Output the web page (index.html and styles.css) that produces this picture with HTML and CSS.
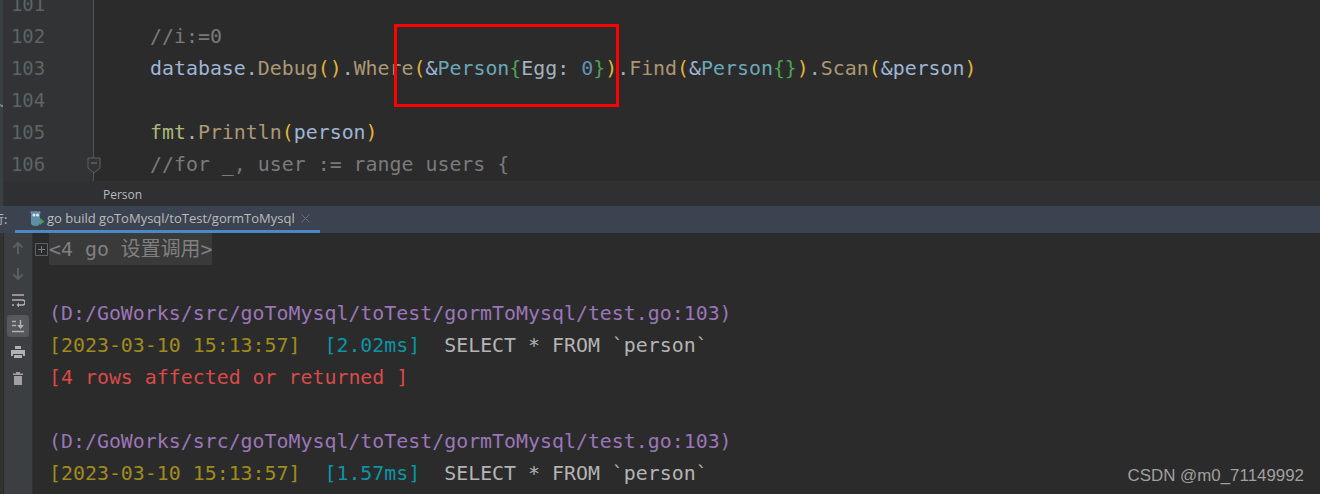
FILE: index.html
```html
<!DOCTYPE html>
<html lang="zh">
<head>
<meta charset="utf-8">
<title>go build</title>
<link rel="stylesheet" href="styles.css">
</head>
<body>
<main class="ide">
  <section class="upper">
    <div class="edge"><span class="edge-mark">⌄</span></div>
    <div class="upper-main">
      <div class="editor">
        <div class="gutter">
          <div class="num">101</div>
          <div class="num">102</div>
          <div class="num">103</div>
          <div class="num">104</div>
          <div class="num">105</div>
          <div class="num">106</div>
          <svg class="fold-end" width="14" height="18" viewBox="0 0 14 18"><path d="M1 1h12v10l-6 5-6-5z" fill="#313335" stroke="#5f6265"/><path d="M4 6h6" stroke="#7a7d80"/></svg>
        </div>
        <div class="code">
          <div class="ln"></div>
          <div class="ln cm">//i:=0</div>
          <div class="ln"><span class="var">database</span><span class="pl">.</span><span class="fn">Debug</span><span class="yl">()</span><span class="pl">.</span><span class="fn">Where</span><span class="yl">(</span><span class="var">&amp;</span><span class="ty">Person</span><span class="gr">{</span><span class="pl">Egg: </span><span class="no">0</span><span class="gr">}</span><span class="yl">)</span><span class="pl">.</span><span class="fn">Find</span><span class="yl">(</span><span class="var">&amp;</span><span class="ty">Person</span><span class="gr">{}</span><span class="yl">)</span><span class="pl">.</span><span class="fn">Scan</span><span class="yl">(</span><span class="var">&amp;person</span><span class="yl">)</span></div>
          <div class="ln"></div>
          <div class="ln"><span class="pk">fmt</span><span class="pl">.</span><span class="fn">Println</span><span class="yl">(</span><span class="var">person</span><span class="yl">)</span></div>
          <div class="ln cm">//for _, user := range users {</div>
        </div>
      </div>
      <div class="crumb">Person</div>
    </div>
  </section>

  <nav class="tabs">
    <span class="run-label">行:</span>
    <div class="tab">
      <svg class="gopher" width="15" height="17" viewBox="0 0 15 17">
        <circle cx="1.800" cy="2.500" r="1.300" fill="#6f9fb8"/><circle cx="9.200" cy="2.500" r="1.300" fill="#6f9fb8"/>
        <path d="M1 5c0-3 2-4 4.500-4S10 2 10 5v8c0 2-2 3-4.500 3S1 15 1 13z" fill="#5f8fa8"/>
        <circle cx="4" cy="5" r="1.500" fill="#dfe8ee"/><circle cx="7.500" cy="5" r="1.500" fill="#dfe8ee"/>
        <path d="M10 8l4.500 3.500L10 15z" fill="#499c54"/>
      </svg>
      <span class="tab-name">go build goToMysql/toTest/gormToMysql</span>
      <svg class="tab-close" width="9" height="9" viewBox="0 0 9 9"><path d="M.5.500l8 8M8.500.500l-8 8" stroke="#6e7276" fill="none"/></svg>
    </div>
  </nav>

  <section class="lower">
    <div class="edge-dark"></div>
    <aside class="tools">
      <svg class="tool" width="14" height="14" viewBox="0 0 14 14"><path d="M7 13V2M2.500 6.500L7 2l4.500 4.500" stroke="#5b5f62" stroke-width="2" fill="none"/></svg>
      <svg class="tool" width="14" height="14" viewBox="0 0 14 14"><path d="M7 1v11M2.500 7.500L7 12l4.500-4.500" stroke="#5b5f62" stroke-width="2" fill="none"/></svg>
      <svg class="tool" width="14" height="14" viewBox="0 0 14 14"><path d="M1 2h12M1 7h10.500a2 2 0 0 1 0 5H7M1 12h2" stroke="#afb1b3" stroke-width="1.500" fill="none"/><path d="M8 9.500L5.500 12 8 14.500z" fill="#afb1b3"/></svg>
      <div class="tool-on"><svg width="14" height="14" viewBox="0 0 14 14"><path d="M1 2.500h4M1 6.500h4M1 12.500h12M9.500 1v6" stroke="#afb1b3" stroke-width="1.500" fill="none"/><path d="M6 6h7l-3.500 4z" fill="#afb1b3"/></svg></div>
      <svg class="tool" width="14" height="14" viewBox="0 0 14 14"><path d="M4 1h6v3H4zM0 5h14v6h-2V9H2v2H0zM3 10h8v3H3z" fill="#afb1b3"/></svg>
      <svg class="tool" width="14" height="14" viewBox="0 0 14 14"><path d="M2 2.500h10v1.500H2zM5 1h4v1.500H5zM3 5h8v9H3z" fill="#9fa1a3"/></svg>
    </aside>
    <div class="console">
      <div class="fold-col"><svg class="fold-box" width="13" height="13" viewBox="0 0 13 13"><path d="M.5.500h12v12H.5z" fill="none" stroke="#5f6265"/><path d="M3 6.500h7M6.500 3v7" stroke="#7a7d80"/></svg></div>
      <div class="output">
        <div class="ln"><span class="folded">&lt;4 go 设置调用&gt;</span></div>
        <div class="ln"></div>
        <div class="ln path">(D:/GoWorks/src/goToMysql/toTest/gormToMysql/test.go:103)</div>
        <div class="ln"><span class="date">[2023-03-10 15:13:57]</span>  <span class="ms">[2.02ms]</span>  <span class="sql">SELECT * FROM `person`</span></div>
        <div class="ln err">[4 rows affected or returned ]</div>
        <div class="ln"></div>
        <div class="ln path">(D:/GoWorks/src/goToMysql/toTest/gormToMysql/test.go:103)</div>
        <div class="ln"><span class="date">[2023-03-10 15:13:57]</span>  <span class="ms">[1.57ms]</span>  <span class="sql">SELECT * FROM `person`</span></div>
      </div>
    </div>
  </section>

  <div class="callout"></div>
  <div class="watermark">CSDN @m0_71149992</div>
</main>
</body>
</html>
```

FILE: styles.css
```css
* { box-sizing: border-box; }
html, body { margin: 0; padding: 0; background: #2b2b2b; }
.ide {
  position: relative;
  width: 1320px;
  height: 494px;
  overflow: hidden;
  display: flex;
  flex-direction: column;
  font-family: "DejaVu Sans Mono", "Noto Sans CJK SC", monospace;
  font-size: 19.9px;
}
.upper { height: 206px; display: flex; flex: none; }
.edge { width: 4px; background: #3c3f41; border-right: 1px solid #323232; position: relative; overflow: hidden; }
.edge-mark { position: absolute; top: 96px; left: -3px; font: 12px "DejaVu Sans", sans-serif; color: #9a9a9a; }
.upper-main { flex: 1; display: flex; flex-direction: column; min-width: 0; }
.editor { height: 181px; display: flex; overflow: hidden; flex: none; }
.gutter {
  position: relative;
  width: 90px;
  flex: none;
  background: #313335;
  border-right: 1px solid #555555;
  padding-left: 7px;
}
.num { height: 32px; line-height: 32px; color: #606366; font-size: 18.9px; }
.num:first-child { margin-top: -12px; }
.fold-end { position: absolute; left: 83px; top: 157px; }
.code { flex: 1; padding-left: 56px; }
.code .ln:first-child { margin-top: -12px; }
.ln { height: 32px; line-height: 34px; white-space: pre; }
.cm { color: #7a7a7a; }
.var { color: #9fb5d4; }
.pl { color: #a3b0be; }
.fn { color: #ab9874; }
.yl { color: #e0b438; }
.ty { color: #6aa8b6; }
.gr { color: #50a254; }
.no { color: #6592b4; }
.pk { color: #a9b97a; }
.crumb {
  height: 25px;
  background: #2e3032;
  border-top: 1px solid #323232;
  padding-left: 99px;
  font: 12px/25px "Open Sans", "Liberation Sans", sans-serif;
  color: #bbbbbb;
}
.tabs {
  height: 27px;
  flex: none;
  display: flex;
  background: #3c4350;
  font: 13px/26px "Open Sans", "Liberation Sans", sans-serif;
  color: #bbbbbb;
}
.run-label { width: 15px; flex: none; overflow: hidden; white-space: nowrap; text-indent: -8px; font-family: "Noto Sans CJK SC", sans-serif; font-size: 12px; }
.tab {
  width: 305px;
  flex: none;
  display: flex;
  align-items: center;
  height: 27px;
  padding-left: 15px;
  border-bottom: 3px solid #4a88c7;
}
.gopher { flex: none; margin-right: 2px; }
.tab-name { white-space: nowrap; width: 247px; flex: none; }
.tab-close { flex: none; margin-left: 7px; }
.lower { flex: 1; display: flex; min-height: 0; }
.edge-dark { width: 4px; flex: none; background: #313335; border-right: 1px solid #2b2b2b; }
.tools {
  width: 29px;
  flex: none;
  background: #3c3f41;
  border-right: 1px solid #323232;
  display: flex;
  flex-direction: column;
  align-items: center;
  padding-top: 8px;
  gap: 12px;
}
.tool { flex: none; }
.tool-on {
  width: 22px;
  height: 22px;
  margin: -4px 0;
  background: #55595b;
  border-radius: 3px;
  display: flex;
  align-items: center;
  justify-content: center;
}
.console { flex: 1; display: flex; min-width: 0; }
.fold-col { width: 16px; flex: none; padding: 10px 0 0 2px; }
.fold-col svg { display: block; }
.output { flex: 1; }
.folded { display: inline-block; height: 32px; background: #3a3a3a; color: #808080; }
.path { color: #9a76b8; }
.date { color: #a08c1c; }
.ms { color: #0c95a5; }
.sql { color: #b4b4b4; }
.err { color: #d94a48; }
.callout {
  position: absolute;
  left: 394px;
  top: 24px;
  width: 225px;
  height: 83px;
  border: 3px solid #ff0000;
}
.watermark {
  position: absolute;
  right: 16px;
  top: 466px;
  font: 16.9px/20px "Liberation Sans", sans-serif;
  color: #a0a0a0;
}
```
